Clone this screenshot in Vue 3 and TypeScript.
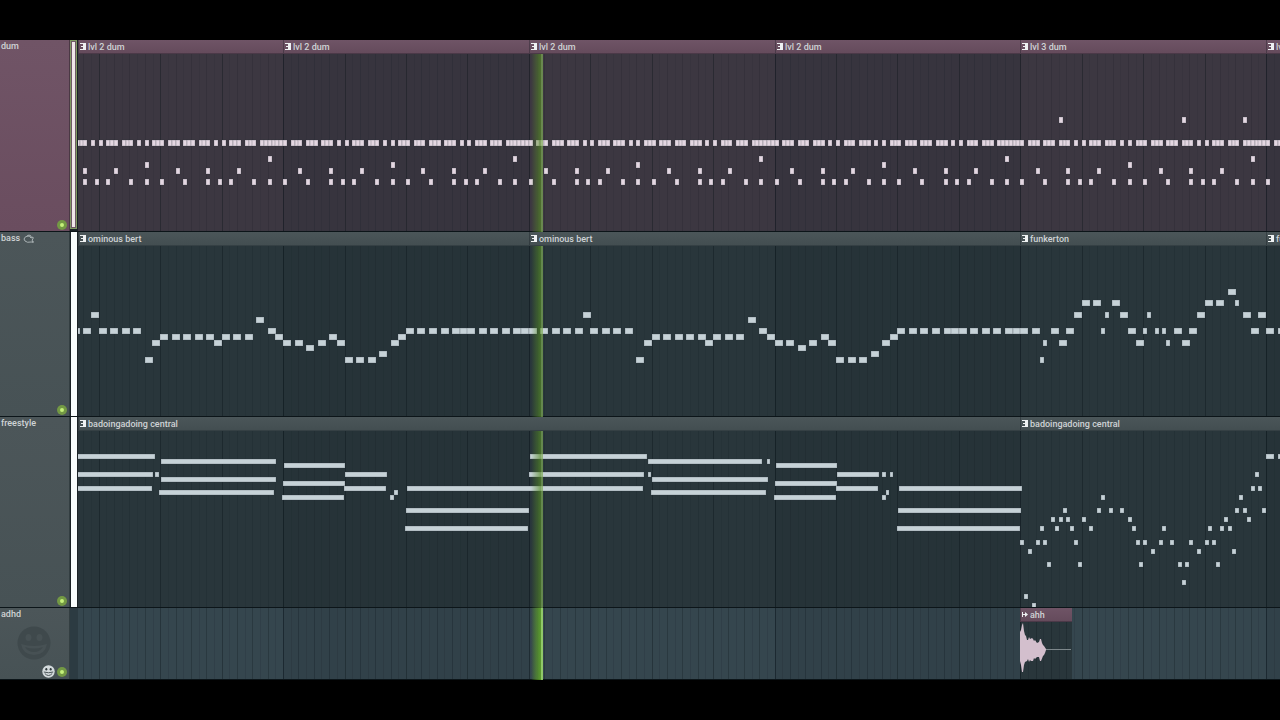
<script setup lang="ts">
type Note = { start: number; row: number; len: number }
type Span = { from: number; to: number; row: number }
type Clip = { title: string; start: number; bars: number; notes?: Note[]; spans?: Span[]; audio?: boolean }
type Track = {
  id: string
  name: string
  tone: string
  top: number
  rowHeight: number
  noteHeight: number
  bodyHeight: number
  clips: Clip[]
}

const VIEW_START = 78
const ORIGIN = 37.3
const STEP = 3.84
const BAR = STEP * 64
const barX = (bar: number): number => Math.round(ORIGIN + bar * BAR)

const one = (row: number, starts: number[]): Note[] => starts.map((start) => ({ start, row, len: 1 }))

const hats = [
  0, 2, 3, 4, 6, 7, 8, 10, 11, 12, 14, 16, 18, 19, 20, 22, 23, 24, 26, 28, 30, 31, 32, 34, 35, 36,
  38, 39, 40, 42, 43, 44, 46, 48, 50, 51, 52, 54, 55, 56, 58, 59, 60, 61, 62, 63,
]
const drums: Note[] = [
  ...one(4, hats),
  ...one(7, [60]),
  ...one(8, [28]),
  ...one(9, [4, 12, 20, 36, 44, 52]),
  ...one(11, [0, 6, 12, 15, 18, 24, 28, 32, 38, 44, 47, 50, 56, 60]),
]
const drumsThree: Note[] = [...drums, ...one(0, [10, 42, 58])]

const toNotes = (list: number[][]): Note[] => list.map(([start, row, len = 2]) => ({ start, row, len }))
const bert = toNotes([
  [0, 7], [3, 7], [6, 7], [9, 7], [12, 7], [14, 4], [16, 7], [19, 7], [22, 7], [25, 7], [28, 12], [30, 9],
  [32, 8], [35, 8], [38, 8], [41, 8], [44, 8], [46, 9], [48, 8], [51, 8], [54, 8], [57, 5], [60, 7], [62, 8],
  [64, 9], [67, 9], [70, 10], [73, 9], [76, 8], [78, 9], [80, 12], [83, 12], [86, 12], [89, 11], [92, 9],
  [94, 8], [96, 7], [99, 7], [102, 7], [105, 7], [108, 7], [110, 7], [112, 7], [115, 7], [118, 7], [121, 7],
  [124, 7], [126, 7],
])
const funk = toNotes([
  [0, 7], [3, 7], [5, 12, 1], [6, 9, 1], [8, 7], [10, 9], [12, 7], [14, 4], [16, 2], [19, 2], [21, 7, 1],
  [22, 4, 1], [24, 2], [26, 4], [28, 7], [30, 9], [32, 7, 1], [33, 4, 1], [35, 7, 1], [37, 7, 1], [38, 9, 1],
  [40, 7], [42, 9], [44, 7], [46, 4], [48, 2], [51, 2], [54, 0], [56, 2, 1], [58, 4], [60, 7], [62, 4],
])

const chords: Span[] = [
  [40, 118, 0], [40, 116, 4], [118, 122, 4], [40, 115, 7],
  [124, 239, 1], [124, 239, 5], [122, 237, 8],
  [247, 308, 2], [246, 308, 6], [245, 307, 9],
  [308, 350, 4], [307, 349, 7], [353, 357, 9], [357, 361, 8],
  [370, 606, 7], [369, 492, 12], [368, 491, 16],
  [493, 610, 0], [492, 607, 4], [611, 614, 4],
  [611, 725, 1], [730, 733, 1], [615, 731, 5], [614, 729, 8],
  [739, 800, 2], [738, 800, 6], [737, 799, 9],
  [800, 842, 4], [845, 849, 4], [853, 856, 4], [799, 841, 7], [845, 849, 9], [849, 852, 8],
  [862, 985, 7], [861, 984, 12], [860, 983, 16],
].map(([from, to, row]) => ({ from, to, row }))

const melody: Note[] = [
  ...toNotes([
    [0, 19], [1, 31], [2, 21], [3, 33], [4, 19], [5, 16], [6, 19], [7, 24], [8, 14], [9, 16], [10, 14], [11, 12],
    [12, 14], [13, 16], [14, 19], [15, 24], [16, 14], [18, 16], [20, 12], [21, 9], [23, 12], [26, 12], [28, 14],
    [29, 16], [30, 19], [31, 24], [32, 19], [34, 21], [36, 19], [37, 16], [39, 19], [41, 24], [42, 28], [43, 24],
    [44, 19], [46, 21], [48, 19], [49, 16], [50, 19], [51, 24], [52, 16], [53, 14], [54, 16], [55, 21], [56, 12],
    [57, 9], [58, 12], [59, 14], [60, 7], [61, 4], [62, 7], [63, 12],
  ]).map((n) => ({ ...n, len: 1 })),
  ...toNotes([[64, 0], [67, 0]]),
]

const tracks: Track[] = [
  {
    id: 'dum', name: 'dum', tone: 'plum', top: 63, rowHeight: 5.64, noteHeight: 6, bodyHeight: 177,
    clips: [
      { title: 'lvl 2 dum', start: 0, bars: 1, notes: drums },
      { title: 'lvl 2 dum', start: 1, bars: 1, notes: drums },
      { title: 'lvl 2 dum', start: 2, bars: 1, notes: drums },
      { title: 'lvl 2 dum', start: 3, bars: 1, notes: drums },
      { title: 'lvl 3 dum', start: 4, bars: 1, notes: drumsThree },
      { title: 'lvl 3 dum', start: 5, bars: 1, notes: drumsThree },
    ],
  },
  {
    id: 'bass', name: 'bass', tone: 'slate', top: 43, rowHeight: 5.64, noteHeight: 6, bodyHeight: 170,
    clips: [
      { title: 'ominous bert', start: 0, bars: 2, notes: bert },
      { title: 'ominous bert', start: 2, bars: 2, notes: bert },
      { title: 'funkerton', start: 4, bars: 1, notes: funk },
      { title: 'funkerton', start: 5, bars: 1, notes: funk },
    ],
  },
  {
    id: 'freestyle', name: 'freestyle', tone: 'slate', top: 23, rowHeight: 4.5, noteHeight: 5, bodyHeight: 176,
    clips: [
      { title: 'badoingadoing central', start: 0, bars: 4, spans: chords },
      { title: 'badoingadoing central', start: 4, bars: 4, notes: melody },
    ],
  },
  {
    id: 'adhd', name: 'adhd', tone: 'slate', top: 0, rowHeight: 5, noteHeight: 5, bodyHeight: 57,
    clips: [{ title: 'ahh', start: 4, bars: 0.21, audio: true }],
  },
]

const clipLeft = (c: Clip): number => Math.max(barX(c.start), VIEW_START)
const clipWidth = (c: Clip): number => barX(c.start + c.bars) - clipLeft(c)
const gapBefore = (t: Track): number => clipLeft(t.clips[0]) - VIEW_START

const rects = (t: Track, c: Clip): { x: number; y: number; w: number }[] => {
  const shift = ORIGIN + c.start * BAR - clipLeft(c)
  const y = (row: number): number => Math.round(t.top + row * t.rowHeight)
  const fromNotes = (c.notes ?? []).map((n) => ({
    x: Math.round(shift + n.start * STEP),
    y: y(n.row),
    w: n.len * 4,
  }))
  const fromSpans = (c.spans ?? []).map((s) => ({ x: Math.round(shift + s.from), y: y(s.row), w: s.to - s.from }))
  return [...fromNotes, ...fromSpans]
}

const LAST_STEP = 2048
const gridLines = Array.from({ length: LAST_STEP / 2 }, (_, i) => i * 2)
  .map((s) => ({
    x: Math.round(ORIGIN + s * STEP - 71),
    kind: s % 64 === 0 ? 'bar' : s % 16 === 0 ? 'beat' : s % 4 === 0 ? 'step' : 'tick',
  }))
  .filter((l) => l.x > 0)
const darkBars = Array.from({ length: 16 }, (_, i) => ({
  x: barX(i * 2 + 1) - 71,
  w: barX(i * 2 + 2) - barX(i * 2 + 1),
}))
</script>

<template>
  <main class="playlist">
    <section v-for="t in tracks" :key="t.id" class="track" :class="[t.tone, t.id]">
      <header class="head">
        <h2 class="name">
          {{ t.name }}
          <svg v-if="t.id === 'bass'" class="fish" width="12" height="9" viewBox="0 0 12 9" aria-hidden="true">
            <path d="M1 5 Q2 2 5 2 Q7 2 8 4 L10 3 V5 L9 6 L10 8 H8 Q4 9 2 7 Z M4 2 L6 1 L8 2 L8 4 M9 8 H11" />
          </svg>
        </h2>
        <svg v-if="t.id === 'adhd'" class="ghost" width="34" height="34" viewBox="0 0 34 34" aria-hidden="true">
          <circle cx="17" cy="17" r="16.5" />
          <ellipse class="cut" cx="11.5" cy="11.5" rx="3" ry="3.5" />
          <ellipse class="cut" cx="22.5" cy="11.5" rx="3" ry="3.5" />
          <path class="cut" d="M4 18 Q17 22 30 18 Q28 29 17 29 Q6 29 4 18 Z M8 21 Q17 24 26 21 Q23 26 17 26 Q11 26 8 21 Z" fill-rule="evenodd" />
        </svg>
        <div class="tools">
          <svg v-if="t.id === 'adhd'" class="smile" width="13" height="13" viewBox="0 0 13 13" aria-hidden="true">
            <circle cx="6.5" cy="6.5" r="6.2" />
            <ellipse class="eye" cx="4.3" cy="4.2" rx="1" ry="1.3" />
            <ellipse class="eye" cx="8.7" cy="4.2" rx="1" ry="1.3" />
            <path class="mouth" d="M1.8 7 Q6.5 8.5 11.2 7 M2.8 8.5 Q6.5 12.500 10.2 8.5" />
          </svg>
          <button class="led" type="button" :aria-label="`Mute ${t.name}`"></button>
        </div>
      </header>
      <div class="meter"><span class="level"></span></div>
      <div class="lane">
        <svg class="grid" aria-hidden="true">
          <rect v-for="(b, i) in darkBars" :key="i" class="shade" :x="b.x" y="0" :width="b.w" height="100%" />
          <rect v-for="(l, i) in gridLines" :key="'l' + i" :class="l.kind" :x="l.x" y="0" width="1" height="100%" />
        </svg>
        <div class="gap" :style="{ width: gapBefore(t) + 'px' }"></div>
        <article v-for="(c, i) in t.clips" :key="i" class="clip" :class="{ audio: c.audio }" :style="{ width: clipWidth(c) + 'px' }">
          <h3 class="title">
            <svg v-if="!c.audio" class="glyph" width="6" height="7" viewBox="0 0 6 7" aria-hidden="true">
              <path d="M0 0 H6 V7 H0 V6 H3 V4 H1 V3 H3 V1 H0 Z" />
            </svg>
            <svg v-else class="glyph" width="6" height="7" viewBox="0 0 6 7" aria-hidden="true">
              <path d="M0 1 H1 V3 H3 V1 L6 3.5 L3 6 V4 H1 V6 H0 Z" />
            </svg>
            <span>{{ c.title }}</span>
          </h3>
          <svg v-if="c.audio" class="wave" width="51" height="57" viewBox="0 0 51 57" aria-hidden="true">
            <path class="tail" d="M24 27 H51 V28 H24 Z" />
            <path d="M0 10 L1 8 L2 3 L3 1 L4 9 L5 13 L6 14 L7 18 L8 18 L9 15 L10 17 L12 16 L13 17 L14 19 L15 18 L17 21 L19 20 L20 17 L21 17 L22 21 L23 23 L24 24 L26 27 L26 28 L25 31 L24 33 L23 34 L21 39 L20 39 L19 35 L17 35 L15 37 L14 36 L13 39 L11 39 L10 38 L9 40 L8 37 L7 39 L5 40 L4 43 L3 50 L2 50 L1 43 L0 39 Z" />
          </svg>
          <svg v-else class="notes" width="100%" :height="t.bodyHeight" aria-hidden="true">
            <rect v-for="(r, k) in rects(t, c)" :key="k" :x="r.x" :y="r.y" :width="r.w" :height="t.noteHeight" />
          </svg>
        </article>
      </div>
    </section>
    <div class="playhead"></div>
  </main>
</template>

<style>
body {
  margin: 0;
  background: #000;
}
</style>

<style scoped>
.playlist {
  position: relative;
  margin: 40px 0;
  overflow: hidden;
  background: #000;
  color: #cfd3d5;
  font-family: Roboto, "Liberation Sans", sans-serif;
  font-size: 9px;
}
.track {
  display: flex;
  box-sizing: border-box;
  border-bottom: 1px solid #0c1519;
}
.dum { height: 192px; }
.bass { height: 185px; }
.freestyle { height: 191px; }
.adhd { height: 72px; }
.head {
  position: relative;
  display: flex;
  flex: 0 0 70px;
  box-sizing: border-box;
  flex-direction: column;
  justify-content: space-between;
  padding: 0 2px 1px 1px;
  background: linear-gradient(#4c5659, #475255);
  border-right: 1px solid #333e41;
}
.plum .head {
  background: linear-gradient(#705466, #6a4d5f);
  border-right-color: #4a3844;
}
.name,
.title {
  margin: 0;
  font-size: inherit;
  font-weight: 500;
  line-height: 12px;
  white-space: nowrap;
}
.fish {
  margin-left: 1px;
  vertical-align: -2px;
  fill: none;
  stroke: #a9b1b3;
}
.ghost {
  position: absolute;
  top: 18px;
  left: 17px;
  fill: #3f494c;
}
.ghost .cut { fill: #475154; }
.tools {
  display: flex;
  align-items: center;
  justify-content: flex-end;
  gap: 2px;
}
.smile { fill: #d3dadc; }
.smile .eye { fill: #2f383b; }
.smile .mouth { fill: none; stroke: #4a5457; }
.led {
  width: 10px;
  height: 10px;
  box-sizing: border-box;
  padding: 0;
  border: 3px solid rgba(80, 115, 45, 0.7);
  border-radius: 50%;
  background: #c5f07a;
}
.meter {
  display: flex;
  flex: 0 0 8px;
  box-sizing: border-box;
  padding: 0 1px;
  background: #1a2226;
}
.level {
  flex: 1;
  background: #f8fdfd;
}
.plum .meter { padding: 0 1px 2px 0; }
.plum .level {
  box-sizing: border-box;
  border: 1px solid #7f9a63;
  background: #f0e6ea;
  box-shadow: inset 0 0 0 1px #6e5a66;
}
.adhd .meter { background: #2c3b42; }
.adhd .level { background: transparent; }
.lane {
  position: relative;
  display: flex;
  flex: 1;
  min-width: 0;
  overflow: hidden;
  background: #35464e;
}
.grid {
  position: absolute;
  inset: 0 0 0 -7px;
  width: calc(100% + 7px);
  height: 100%;
  z-index: 1;
  pointer-events: none;
}
.shade { fill: rgba(16, 20, 32, 0.09); }
.bar { fill: rgba(5, 14, 20, 0.45); }
.beat { fill: rgba(5, 14, 20, 0.32); }
.step { fill: rgba(5, 14, 20, 0.13); }
.tick { fill: rgba(5, 14, 20, 0.06); }
.adhd .step { fill: rgba(5, 14, 20, 0.22); }
.adhd .tick { fill: rgba(5, 14, 20, 0.1); }
.gap { flex: none; }
.clip {
  flex: none;
  background: #29363b;
}
.plum .clip { background: #3c3741; }
.title {
  position: relative;
  z-index: 4;
  display: flex;
  box-sizing: border-box;
  height: 14px;
  align-items: center;
  gap: 2px;
  overflow: hidden;
  padding-left: 2px;
  background: linear-gradient(#4b5659, #434e51);
  border-bottom: 1px solid #354044;
  box-shadow: inset 1px 0 rgba(10, 16, 22, 0.3);
}
.plum .title,
.audio .title {
  background: linear-gradient(#6f5466, #654b5c);
  border-bottom-color: #4b3948;
}
.glyph {
  flex: none;
  fill: #eef1f2;
}
.notes {
  position: relative;
  z-index: 2;
  display: block;
  overflow: visible;
  fill: #c6d2d7;
  stroke: rgba(40, 50, 60, 0.25);
}
.plum .notes { fill: #e4d7e2; }
.wave {
  position: relative;
  z-index: 2;
  display: block;
  fill: #d3bfcd;
}
.wave .tail { fill: #7d878b; }
.playhead {
  position: absolute;
  z-index: 3;
  top: 14px;
  bottom: 0;
  left: 531px;
  width: 12px;
  background:
    linear-gradient(90deg, rgba(105, 190, 40, 0), rgba(105, 190, 40, 0.5) 80%, rgba(170, 240, 120, 0.6) 84%) bottom / 100% 72px no-repeat,
    linear-gradient(90deg, rgba(85, 140, 35, 0), rgba(85, 140, 35, 0.65) 80%, rgba(125, 170, 85, 0.7) 84%);
}
</style>
